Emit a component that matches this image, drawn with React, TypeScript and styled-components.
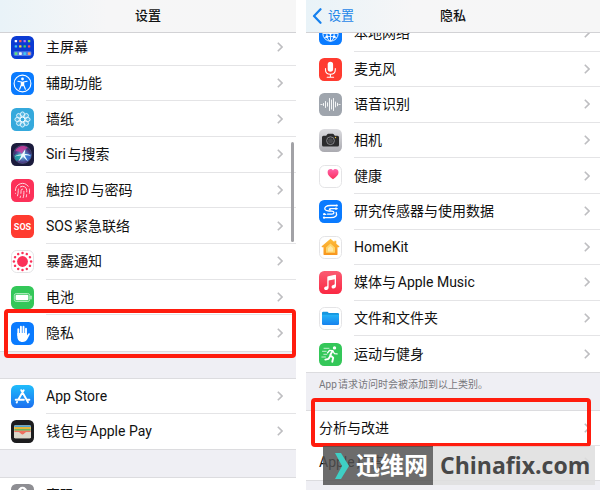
import React from "react";
import styled, { createGlobalStyle } from "styled-components";
import { Fingerprint } from "lucide-react";

const GlobalStyle = createGlobalStyle`
  * { box-sizing: border-box; }
  body {
    margin: 0;
    background: #fff;
    color: #111;
    font-family: Roboto, "Noto Sans CJK SC", sans-serif;
    font-size: 14px;
    line-height: 20px;
    text-autospace: normal;
  }
`;

const Screens = styled.main`
  display: grid;
  grid-template-columns: 296fr 294fr;
  gap: 10px;
  height: 100vh;
  overflow: hidden;
`;

const Panel = styled.section`
  position: relative;
  display: flex;
  flex-direction: column;
  min-width: 0;
  min-height: 0;
  background: #efeff4;
`;

const Header = styled.header`
  position: relative;
  z-index: 1;
  flex: none;
  display: grid;
  grid-template-columns: 1fr auto 1fr;
  align-items: center;
  height: 33px;
  padding: 0 6px 1px;
  border-bottom: 1px solid #d2d2d5;
  background: linear-gradient(90deg, #e9f3f8 0, #f6f6f7 36%, #f6f6f6 100%);
`;

const Title = styled.h1`
  grid-column: 2;
  margin: 0;
  font-size: 13px;
  line-height: 20px;
  font-weight: 500;
`;

const BackLink = styled.a`
  display: flex;
  align-items: center;
  gap: 6px;
  justify-self: start;
  color: #1f86e8;
  font-size: 13px;
  text-decoration: none;
`;

const Scroller = styled.div`
  flex: 1;
  min-height: 0;
  overflow: hidden;
`;

const Group = styled.ul<{ $height: number; $scrolled?: number }>`
  display: grid;
  grid-auto-rows: 1fr;
  min-height: ${(p) => p.$height}px;
  margin: ${(p) => (p.$scrolled ? -p.$scrolled : 0)}px 0 0;
  padding: 0;
  list-style: none;
  background: #fff;
  border: solid #dcdcdf;
  border-width: 1px 0;
`;

const Spacer = styled.div<{ $height: number }>`
  height: ${(p) => p.$height}px;
`;

const Item = styled.li`
  position: relative;
  display: flex;
`;

const RowLink = styled.a<{ $inset: number }>`
  flex: 1;
  display: flex;
  align-items: center;
  gap: 12px;
  padding-left: ${(p) => p.$inset}px;
  color: inherit;
  text-decoration: none;
`;

const RowBody = styled.span<{ $end: number }>`
  flex: 1;
  align-self: stretch;
  display: flex;
  align-items: center;
  justify-content: space-between;
  padding-right: ${(p) => p.$end}px;
  white-space: nowrap;
  border-bottom: 1px solid #e4e4e6;
  ${Item}:last-child & { border-bottom-color: transparent; }
`;

const Highlight = styled.span<{ $inset: string }>`
  position: absolute;
  z-index: 1;
  inset: ${(p) => p.$inset};
  border: 4px solid #ff1c0e;
  border-radius: 4px;
  pointer-events: none;
`;

const Note = styled.p`
  margin: 0;
  height: 37px;
  padding: 4px 13px 0;
  font-size: 10px;
  line-height: 15px;
  color: #77777c;
`;

const ScrollThumb = styled.div`
  position: absolute;
  top: 142px;
  right: 2px;
  width: 3px;
  height: 100px;
  border-radius: 2px;
  background: #a2a2a6;
`;

const Watermark = styled.div`
  position: absolute;
  z-index: 2;
  right: 5px;
  bottom: 5px;
  display: flex;
  height: 39px;
  line-height: 38px;
  font-size: 24px;
  font-weight: 700;
  white-space: nowrap;
`;

const Brand = styled.span`
  display: flex;
  align-items: center;
  gap: 7px;
  width: 110px;
  padding-left: 12px;
  color: #fff;
  background: rgba(80, 80, 80, 0.84);
`;

const Domain = styled.span`
  width: 162px;
  padding-left: 7px;
  color: #484848;
  font-family: "Open Sans", sans-serif;
  font-size: 23px;
  background: rgba(222, 222, 222, 0.86);
`;

const IconSvg = styled.svg`
  flex: none;
  display: block;
  width: 23px;
  height: 23px;
`;

const Tile = ({ fill, edge, children }: { fill: string; edge?: boolean; children?: React.ReactNode }) => (
  <IconSvg viewBox="0 0 23 23" fill="none" aria-hidden="true">
    <rect x={edge ? 0.5 : 0} y={edge ? 0.5 : 0} width={edge ? 22 : 23} height={edge ? 22 : 23} rx="5.2" fill={fill} stroke={edge ? "#e4e4e6" : "none"} />
    {children}
  </IconSvg>
);

const around = (n: number) => Array.from({ length: n }, (_, i) => (360 / n) * i);

const HomeScreenIcon = () => (
  <Tile fill="#0b3bd3">
    <rect x="2.6" y="15.2" width="17.8" height="4.8" rx="1.4" fill="#4f78e4" />
    {[
      ["#fff", "#ff5a4d", "#b96cf5", "#8fe04a"],
      ["#35c5f4", "#ffd23c", "#36d36b", "#ff4d5e"],
    ].map((row, r) => row.map((c, i) => <rect key={`${r}${i}`} x={3.7 + i * 4.4} y={3.9 + r * 5.3} width="2.4" height="2.4" rx=".6" fill={c} />))}
    {["#5ee27c", "#f4f4f6", "#3fc6f5", "#ff9d6e"].map((c, i) => <rect key={c} x={3.6 + i * 4.4} y="16.2" width="2.8" height="2.8" rx=".7" fill={c} />)}
  </Tile>
);

const AccessibilityIcon = () => (
  <Tile fill="#0a7bff">
    <circle cx="11.5" cy="11.5" r="8.4" stroke="#fff" strokeWidth="1.1" />
    <circle cx="11.5" cy="7" r="1.4" fill="#fff" />
    <path d="M6.9 9.3 10.3 10v3l-1.7 4.2M16.1 9.3 12.7 10v3l1.7 4.2" stroke="#fff" strokeWidth="1.1" strokeLinecap="round" strokeLinejoin="round" />
    <path d="M10 9.7h3v3.6l-.6 1h-1.8l-.6-1z" fill="#fff" />
  </Tile>
);

const WallpaperIcon = () => (
  <Tile fill="#35a9dc">
    {around(8).map((a) => <ellipse key={a} cx="11.5" cy="6.3" rx="2.1" ry="2.4" stroke="#e6f7ff" strokeWidth=".9" fill="#fff" fillOpacity=".18" transform={`rotate(${a} 11.5 11.5)`} />)}
    <circle cx="11.5" cy="11.5" r="2.4" stroke="#fff" strokeWidth="1" />
  </Tile>
);

const SiriIcon = () => (
  <Tile fill="#1b1b3c">
    <defs>
      <radialGradient id="siri" cx=".5" cy=".55" r=".55">
        <stop offset="0" stopColor="#e8f8ff" />
        <stop offset=".3" stopColor="#5796c9" />
        <stop offset=".75" stopColor="#493580" />
        <stop offset="1" stopColor="#1b2450" />
      </radialGradient>
    </defs>
    <circle cx="11.5" cy="11.5" r="9" fill="url(#siri)" stroke="#64739c" strokeWidth=".5" />
    <path d="M4 8.5C6 3 13 1.5 17 5c-3 .5-5 2.5-6 6C9 8.5 6.5 8 4 8.5Z" fill="#d440a0" opacity=".8" />
    <path d="M3.5 12c3-1.5 6-1 8 0-1 3-3 5-6 6-1.5-1.5-2.2-4-2-6Z" fill="#1ea9a6" opacity=".8" />
    <path d="M12 12c3-2 6-2 8.3-.5 0 3-1.5 5.5-4 7-2-1.5-3.5-3.5-4.3-6.5Z" fill="#3479d8" opacity=".8" />
    <path d="M3.5 13.8c3-2 5.200-2.500 7.500-2.600L14.300 6c0 2.200-.4 3.700-.8 5.200 2.600-.4 4.800.3 6.500 2-2.500-1-4.500-1.100-6.200-.6 1 2 1.900 3.500 3.200 5.700-2.300-1.500-3.900-3.200-5-5-1 2-2.500 3.700-4.800 5.300 1.400-2.100 2.400-4 3.200-6-2.300-.2-4.500.2-6.900 1.200Z" fill="#effcff" />
  </Tile>
);

const TouchIdIcon = () => (
  <Tile fill="#fc3159">
    <Fingerprint x="3" y="3" width="17" height="17" color="#ffd9e0" strokeWidth={1.4} />
  </Tile>
);

const SosIcon = () => (
  <Tile fill="#ff3b30">
    <text x="11.5" y="15" textAnchor="middle" fill="#fff" fontFamily="Liberation Sans Narrow, Roboto, sans-serif" fontSize="9" fontWeight="700">SOS</text>
  </Tile>
);

const ExposureIcon = () => (
  <Tile fill="#fff" edge>
    <circle cx="11.5" cy="11.5" r="5.4" fill="#fb3158" />
    {around(12).map((a) => <circle key={a} cx="11.5" cy="2.9" r="1.25" fill="#fb3158" transform={`rotate(${a} 11.5 11.5)`} />)}
  </Tile>
);

const BatteryIcon = () => (
  <Tile fill="#34c759">
    <rect x="3.3" y="7.5" width="15.4" height="8" rx="2" stroke="#b9efc6" strokeWidth=".9" />
    <rect x="4.6" y="8.8" width="12.8" height="5.4" rx="1" fill="#fff" />
    <path d="M20 10.2v2.6" stroke="#d7f6de" strokeWidth="1.2" strokeLinecap="round" />
  </Tile>
);

const HandIcon = () => (
  <Tile fill="#0a7bff">
    <path d="M7.3 7.2v6M9.9 4.8v7M12.5 4.8v7M15 6.7v7" stroke="#fff" strokeWidth="1.9" strokeLinecap="round" />
    <path d="M6.35 11h9.6v2.6l1.3-1.800c.7-.9 1.900-.4 1.500.7l-2.300 4.500c-1 2-2.700 3-4.900 3-3.200 0-5.200-2.200-5.200-5.500Z" fill="#fff" />
  </Tile>
);

const AppStoreIcon = () => (
  <Tile fill="url(#store)">
    <defs><linearGradient id="store" x2="0" y2="1"><stop stopColor="#20bdfb" /><stop offset="1" stopColor="#1c6ff0" /></linearGradient></defs>
    <path d="m12.7 5.2-5.5 9.6M10.3 5.2l6.700 12M4.700 14.700h8.200M16 14.700h2.400M6 16.900l-.3.500" stroke="#fff" strokeWidth="1.900" strokeLinecap="round" />
  </Tile>
);

const WalletIcon = () => (
  <Tile fill="#1c1c1e">
    <rect x="3" y="5.2" width="17" height="13" rx="1.3" fill="#dcd8cb" />
    <path d="M3.3 7V6.2q0-.7.8-.7h14.8q.8 0 .8.7V7Z" fill="#4aa3d1" />
    <path d="M3.3 7h16.4v2H3.3z" fill="#e7b43a" />
    <path d="M3.3 9h16.4v1.8H3.3z" fill="#6cb559" />
    <path d="M3.3 10.8h16.4v1.5h-4.5c-1.5 0-1.7 2.500-3.700 2.500s-2.200-2.500-3.700-2.500H3.300Z" fill="#ee7060" />
    <path d="M3 12.200h4.400c2 0 2 2.500 4.100 2.500s2.100-2.500 4.100-2.500H20v5q0 1-1.300 1H4.300q-1.300 0-1.300-1Z" fill="#dcd8cb" />
  </Tile>
);

const KeyIcon = () => (
  <Tile fill="#8e8e93">
    <circle cx="11.5" cy="7.5" r="4.7" fill="#fff" />
    <circle cx="11.5" cy="6" r="1.2" fill="#8e8e93" />
    <path d="M10 11h3v8l-1.5 1.5L10 19Z" fill="#fff" />
  </Tile>
);

const GlobeIcon = () => (
  <Tile fill="#0a7bff">
    <g stroke="#e3f1ff" strokeWidth="1">
      <circle cx="11.5" cy="11.5" r="7.7" />
      <ellipse cx="11.5" cy="11.5" rx="3.7" ry="7.7" />
      <path d="M4 11.5h15M5.4 7.5q6 2.5 12.2 0M5.4 15.5q6-2.5 12.2 0M11.5 4v15" />
    </g>
    <g fill="#fff"><circle cx="7.8" cy="14.7" r="1.3" /><circle cx="15.2" cy="14.7" r="1.3" /><circle cx="11.5" cy="11.5" r="1.3" /></g>
  </Tile>
);

const MicIcon = () => (
  <Tile fill="#ff3b30">
    <rect x="8.7" y="3.8" width="5.4" height="10" rx="2.7" fill="#fff" />
    <path d="M6.5 10.5v1.3c0 2.8 2 4.5 4.9 4.5s4.9-1.7 4.9-4.5v-1.3M11.4 16.5v2.5M8.2 19.2h6.4" stroke="#fff" strokeWidth="1.1" strokeLinecap="round" />
  </Tile>
);

const WaveIcon = () => (
  <Tile fill="#9fa5ad">
    <path d="M1.5 11.5h2M19.500 11.500h2" stroke="#fff" strokeWidth=".8" />
    <path d="M4.500 10.500v2M6.500 8.500v6M8.500 9.800v3.400M10.500 5.500v12M12.500 7v9M14.500 5.500v12M16.500 9v5M18.500 10.200v2.600" stroke="#fff" strokeWidth=".9" strokeLinecap="round" />
  </Tile>
);

const CameraIcon = () => (
  <Tile fill="url(#cam)">
    <defs><linearGradient id="cam" x2="0" y2="1"><stop stopColor="#dcdce0" /><stop offset="1" stopColor="#aaaab0" /></linearGradient></defs>
    <path d="M4.5 6.7h2.7l1.1-1.5q.3-.4.9-.4h4.6q.6 0 .9.4l1.1 1.5h2.7q1.5 0 1.5 1.5v7.8q0 1.5-1.5 1.5h-14Q3 17.5 3 16V8.2q0-1.5 1.5-1.5Z" fill="#2a2a2c" />
    <circle cx="11.5" cy="11.7" r="3.9" stroke="#8d8d92" strokeWidth=".9" />
    <circle cx="11.5" cy="11.7" r="2.5" fill="#48484b" />
    <circle cx="16.5" cy="8.5" r=".7" fill="#f3c33b" />
  </Tile>
);

const HealthIcon = () => (
  <Tile fill="#fff" edge>
    <defs><linearGradient id="heart" x2="0" y2="1"><stop stopColor="#ff62a8" /><stop offset="1" stopColor="#fb2f5b" /></linearGradient></defs>
    <path d="M14 14.3C10.5 11.7 8.6 9.9 8.6 7.2c0-3.200 3.900-4.300 5.400-1.700 1.500-2.600 5.500-1.500 5.500 1.700 0 2.700-1.900 4.500-5.500 7.100Z" fill="url(#heart)" />
  </Tile>
);

const ResearchIcon = () => (
  <Tile fill="#0a7bff">
    <g stroke="#fff" strokeWidth="1.300" strokeLinecap="round">
      <path d="M17.500 5.500h-6c-4.500 0-6.500 2-5.500 4 .6 1.200 2 1.400 4 1.500l3 .2c2.700.2 2.600 2.900-.2 2.900H8.500" />
      <path d="M18.200 8.700h-6.300c-1.800 0-2 .8-.7 1.100" />
      <path d="M5.500 17.700h6c5.200 0 7-2.300 5.700-5.200M4.800 14.300h2" />
    </g>
    <g fill="#fff"><circle cx="17.800" cy="5.500" r="1.100" /><circle cx="5" cy="17.700" r="1.100" /><circle cx="17" cy="8.700" r="1.100" /><circle cx="5.200" cy="14.200" r="1.100" /></g>
  </Tile>
);

const HomeKitIcon = () => (
  <Tile fill="#fff" edge>
    <defs><linearGradient id="house" x2="0" y2="1"><stop stopColor="#fdbd3c" /><stop offset="1" stopColor="#f8951d" /></linearGradient></defs>
    <path d="m11.500 2.800 3.800 3.200V4.700h2v3l3 2.600q.4.900-.6.900h-1.200v7q0 .9-.9.900H5.400q-.9 0-.9-.9v-7H3.300q-1 0-.6-.9Z" fill="url(#house)" />
    <path d="m11.500 7.500 4.500 3.900v5.400H7v-5.400Z" fill="#ffd66c" />
    <path d="m11.500 10 2.500 2.200v3.400H9v-3.400Z" fill="#ffe8a8" />
  </Tile>
);

const MusicIcon = () => (
  <Tile fill="url(#music)">
    <defs><linearGradient id="music" x2="0" y2="1"><stop stopColor="#fb5b73" /><stop offset="1" stopColor="#fa2842" /></linearGradient></defs>
    <path d="M8.300 6.300q0-.9.900-1.100l6.900-1.500q.9-.2.900.7v10.500c0 1.500-1.100 2.400-2.400 2.500-2.600.2-2.700-3-.3-3.500 1-.2 1.400-.4 1.400-1.200V8.200L9.600 9.500v7c0 1.600-1.100 2.500-2.400 2.600-2.600.2-2.800-3-.3-3.500 1-.2 1.400-.4 1.400-1.200Z" fill="#fff" />
  </Tile>
);

const FilesIcon = () => (
  <Tile fill="#fff" edge>
    <defs><linearGradient id="folder" x2="0" y2="1"><stop stopColor="#25b4f7" /><stop offset="1" stopColor="#1782ee" /></linearGradient></defs>
    <path d="M3 6q0-1.300 1.200-1.300h4.300l1.300 1.200h9q1.200 0 1.200 1.200V10H3Z" fill="#1596df" />
    <path d="M3 7.700h17v9q0 1.300-1.200 1.300H4.200Q3 18 3 16.700Z" fill="url(#folder)" />
  </Tile>
);

const FitnessIcon = () => (
  <Tile fill="#34c759">
    <circle cx="15.500" cy="4.900" r="1.700" fill="#fff" />
    <path d="m13.500 8-2.300 4.300 3 2.400-.9 4M11.300 13l-1.700 2.800-3.300.8" stroke="#fff" strokeWidth="1.900" strokeLinecap="round" strokeLinejoin="round" />
    <path d="m8.500 9.800 1.900-2.300 3.400.2 1.700 3 2.600.2" stroke="#fff" strokeWidth="1.300" strokeLinecap="round" strokeLinejoin="round" />
    <path d="M5 5.300h5M3.500 8.300h3.700M4.800 11.300h3M2.800 14h3.700" stroke="#d5f5dc" strokeWidth=".9" strokeLinecap="round" />
  </Tile>
);

const Chevron = () => (
  <svg width="6" height="10" viewBox="0 0 6 10" fill="none" aria-hidden="true">
    <path d="m.8.8 4.200 4.200L.8 9.200" stroke="#bebec1" strokeWidth="1.600" />
  </svg>
);

type RowData = { label: string; icon?: React.ComponentType; highlight?: string };

const Rows = ({ rows, height, scrolled, inset, end }: { rows: RowData[]; height: number; scrolled?: number; inset: number; end: number }) => (
  <Group $height={height} $scrolled={scrolled}>
    {rows.map(({ label, icon: Icon, highlight }) => (
      <Item key={label}>
        <RowLink href="#" $inset={inset}>
          {Icon && <Icon />}
          <RowBody $end={end}>
            {label}
            <Chevron />
          </RowBody>
        </RowLink>
        {highlight && <Highlight $inset={highlight} />}
      </Item>
    ))}
  </Group>
);

const general: RowData[] = [
  { label: "主屏幕", icon: HomeScreenIcon },
  { label: "辅助功能", icon: AccessibilityIcon },
  { label: "墙纸", icon: WallpaperIcon },
  { label: "Siri与搜索", icon: SiriIcon },
  { label: "触控ID与密码", icon: TouchIdIcon },
  { label: "SOS紧急联络", icon: SosIcon },
  { label: "暴露通知", icon: ExposureIcon },
  { label: "电池", icon: BatteryIcon },
  { label: "隐私", icon: HandIcon, highlight: "-6px 0 -7px 4px" },
];

const store: RowData[] = [
  { label: "App Store", icon: AppStoreIcon },
  { label: "钱包与Apple Pay", icon: WalletIcon },
];

const privacy: RowData[] = [
  { label: "本地网络", icon: GlobeIcon },
  { label: "麦克风", icon: MicIcon },
  { label: "语音识别", icon: WaveIcon },
  { label: "相机", icon: CameraIcon },
  { label: "健康", icon: HealthIcon },
  { label: "研究传感器与使用数据", icon: ResearchIcon },
  { label: "HomeKit", icon: HomeKitIcon },
  { label: "媒体与Apple Music", icon: MusicIcon },
  { label: "文件和文件夹", icon: FilesIcon },
  { label: "运动与健身", icon: FitnessIcon },
];

const analytics: RowData[] = [
  { label: "分析与改进", highlight: "-13px 9px -1px 5px" },
  { label: "Apple广告" },
];

export default function App() {
  return (
    <>
      <GlobalStyle />
      <Screens>
        <Panel>
          <Header><Title>设置</Title></Header>
          <Scroller>
            <Rows rows={general} height={323} scrolled={4} inset={11} end={13} />
            <Spacer $height={26} />
            <Rows rows={store} height={72} inset={11} end={13} />
            <Spacer $height={27} />
            <Rows rows={[{ label: "密码", icon: KeyIcon }]} height={37} inset={11} end={13} />
          </Scroller>
          <ScrollThumb />
        </Panel>
        <Panel>
          <Header>
            <BackLink href="#">
              <svg width="10" height="16" viewBox="0 0 10 16" fill="none" aria-hidden="true">
                <path d="M8.500 1.200 2 8l6.500 6.800" stroke="#1580ee" strokeWidth="2.200" strokeLinecap="round" strokeLinejoin="round" />
              </svg>
              设置
            </BackLink>
            <Title>隐私</Title>
          </Header>
          <Scroller>
            <Rows rows={privacy} height={358} scrolled={18} inset={13} end={10} />
            <Note>App请求访问时会被添加到以上类别。</Note>
            <Rows rows={analytics} height={71} inset={13} end={10} />
          </Scroller>
          <Watermark>
            <Brand>
              <svg width="14" height="26" viewBox="0 0 14 26" aria-hidden="true">
                <path d="M0 0h6l8 13-8 13H0l7-13Z" fill="#3fcfc4" />
              </svg>
              迅维网
            </Brand>
            <Domain>Chinafix.com</Domain>
          </Watermark>
        </Panel>
      </Screens>
    </>
  );
}
